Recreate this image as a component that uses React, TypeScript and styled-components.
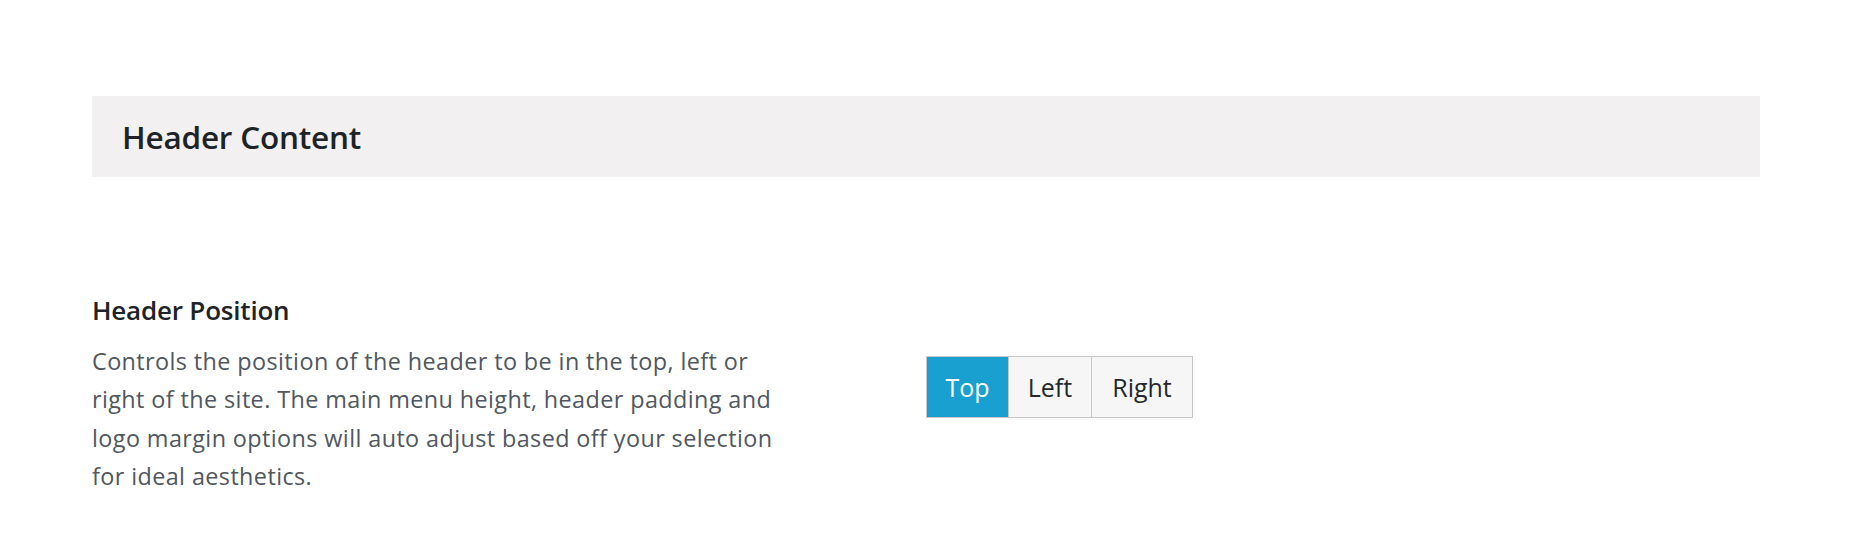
import React, { useState } from "react";
import styled, { createGlobalStyle } from "styled-components";

const Global = createGlobalStyle`
  html, body { margin: 0; padding: 0; background: #ffffff; }
  body { font-family: "Open Sans", "Noto Sans", sans-serif; color: #23282d; }
`;

const Page = styled.div`
  padding: 96px 90px 0 92px;
`;

const SectionHeader = styled.div`
  background: #f2f0f1;
  height: 81px;
  display: flex;
  align-items: center;
  padding-left: 30px;
`;

const SectionTitle = styled.h2`
  margin: 0;
  font-size: 31.5px;
  font-weight: 600;
  letter-spacing: -0.2px;
  color: #1d2327;
`;

const OptionRow = styled.div`
  display: flex;
  margin-top: 117px;
`;

const OptionInfo = styled.div`
  width: 695px;
  flex: none;
`;

const OptionTitle = styled.h3`
  margin: 0 0 16px;
  font-size: 26px;
  line-height: 32px;
  font-weight: 600;
  letter-spacing: -0.2px;
  color: #1d2327;
`;

const OptionDesc = styled.p`
  margin: 0;
  font-size: 23.4px;
  line-height: 38.4px;
  letter-spacing: 0.4px;
  color: #50575e;
`;

const Controls = styled.div`
  margin-left: 139px;
  padding-top: 62px;
`;

const ButtonSet = styled.div`
  display: inline-flex;
  border: 1px solid #c8c8c8;
`;

const SetButton = styled.button<{ $active?: boolean; $w: number }>`
  width: ${(p) => p.$w}px;
  height: 60px;
  border: none;
  border-left: 1px solid #c8c8c8;
  &:first-child { border-left: none; }
  background: ${(p) => (p.$active ? "#1a9fd1" : "#f6f6f6")};
  color: ${(p) => (p.$active ? "#ffffff" : "#23282d")};
  font-family: "Open Sans", "Noto Sans", sans-serif;
  font-size: 25px;
  padding: 0;
  cursor: pointer;
`;

const options = [
  { label: "Top", w: 81 },
  { label: "Left", w: 83 },
  { label: "Right", w: 101 },
];

export default function App() {
  const [sel, setSel] = useState("Top");
  return (
    <>
      <Global />
      <Page>
        <SectionHeader>
          <SectionTitle>Header Content</SectionTitle>
        </SectionHeader>
        <OptionRow>
          <OptionInfo>
            <OptionTitle>Header Position</OptionTitle>
            <OptionDesc>
              Controls the position of the header to be in the top, left or right of the site. The main menu
              height, header padding and logo margin options will auto adjust based off your selection for
              ideal aesthetics.
            </OptionDesc>
          </OptionInfo>
          <Controls>
            <ButtonSet>
              {options.map((o) => (
                <SetButton key={o.label} $w={o.w} $active={sel === o.label} onClick={() => setSel(o.label)}>
                  {o.label}
                </SetButton>
              ))}
            </ButtonSet>
          </Controls>
        </OptionRow>
      </Page>
    </>
  );
}
